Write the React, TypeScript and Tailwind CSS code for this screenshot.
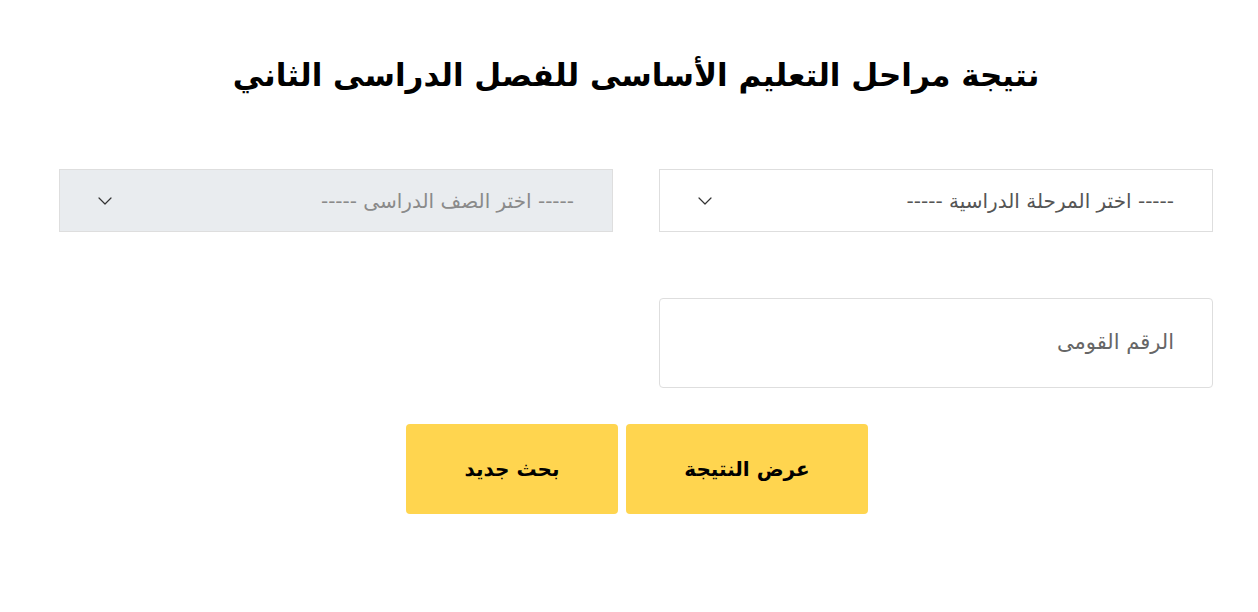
import { ChevronDown } from "lucide-react";

const selects = [
  { label: "----- اختر المرحلة الدراسية -----", disabled: false },
  { label: "----- اختر الصف الدراسى -----", disabled: true },
];

const SelectBox = ({ label, disabled }: { label: string; disabled: boolean }) => {
  return (
    <div
      className={`flex items-center justify-between h-[63px] border border-[#dedede] pr-[38px] pl-[33px] ${
        disabled ? "bg-[#e9ecef]" : "bg-white"
      }`}
    >
      <span className={`text-[20px] ${disabled ? "text-[#8a8a8a]" : "text-[#555]"}`}>{label}</span>
      <ChevronDown className="w-[24px] h-[24px] text-[#333]" strokeWidth={1.2} />
    </div>
  );
};

const App = () => {
  return (
    <div
      dir="rtl"
      className="bg-white min-h-[612px] w-full"
      style={{ fontFamily: '"DejaVu Sans", "Noto Sans", sans-serif' }}
    >
      <div className="w-[1154px] mr-[45px] pt-[50px] flex flex-col">
        <h1 className="text-center text-[31px] font-bold text-black leading-[50px]">
          نتيجة مراحل التعليم الأساسى للفصل الدراسى الثاني
        </h1>
        <div className="grid grid-cols-2 gap-[46px] mt-[69px]">
          {selects.map((s, i) => (
            <SelectBox key={i} label={s.label} disabled={s.disabled} />
          ))}
        </div>
        <div className="grid grid-cols-2 gap-[46px] mt-[66px]">
          <div className="h-[90px] border border-[#dedede] rounded-[4px] flex items-center pr-[38px]">
            <span className="text-[21px] text-[#666]">الرقم القومى</span>
          </div>
          <div />
        </div>
        <div className="flex justify-center gap-[8px] mt-[36px] pl-[2px]">
          <button className="w-[242px] h-[90px] rounded-[4px] bg-[#ffd54f] text-[20px] font-bold text-black">
            عرض النتيجة
          </button>
          <button className="w-[212px] h-[90px] rounded-[4px] bg-[#ffd54f] text-[20px] font-bold text-black">
            بحث جديد
          </button>
        </div>
      </div>
    </div>
  );
};

export default App;
